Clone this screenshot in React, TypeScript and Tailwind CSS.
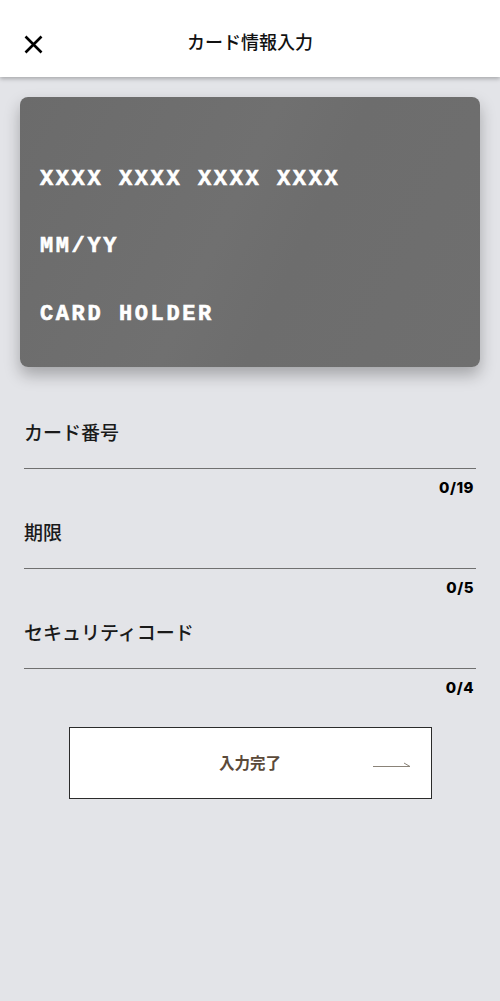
const jp = "font-['Noto_Sans_CJK_JP','Noto_Sans',sans-serif]";

const fields = [
    { label: 'カード番号', max: 19 },
    { label: '期限', max: 5 },
    { label: 'セキュリティコード', max: 4 },
];

const CardPreview = () => {
    return (
        <div className="mx-5 mt-5 h-[270px] rounded-[8px] bg-[linear-gradient(115deg,#6b6b6b_0%,#707070_45%,#6d6d6d_60%,#6f6f6f_100%)] shadow-[0_8px_16px_rgba(0,0,0,0.28)] px-5 pt-[69px] font-['Liberation_Mono',monospace] text-[22px] font-bold tracking-[2.6px] text-white [-webkit-text-stroke:0.6px_white]">
            <p className="leading-[28px]">XXXX XXXX XXXX XXXX</p>
            <p className="mt-[39px] leading-[28px]">MM/YY</p>
            <p className="mt-[40px] leading-[28px]">CARD HOLDER</p>
        </div>
    );
};

const Field = ({ label, max }: { label: string; max: number }) => {
    return (
        <div className="px-6">
            <div className="h-[69px] border-b border-[#707070] pt-[18px]">
                <span className={`${jp} text-[19px] font-medium text-[#1a1a1a]`}>{label}</span>
            </div>
            <p className="h-[31px] pt-[9px] pr-[2px] text-right font-['Inter',sans-serif] text-[15px] leading-[20px] font-extrabold tracking-[0.5px] text-black">
                0/{max}
            </p>
        </div>
    );
};

export default function App() {
    return (
        <div className="min-h-[1001px] bg-[#e3e4e8]">
            <header className="relative flex h-[77px] items-center justify-center bg-white pt-[6px] shadow-[0_2px_4px_rgba(0,0,0,0.25)]">
                <button className="absolute left-[24px] top-[35px]">
                    <svg width="19" height="19" viewBox="0 0 19 19" fill="none">
                        <path d="M1.5 1.5 L17.5 17.5 M17.5 1.5 L1.5 17.5" stroke="#000" strokeWidth="2.6" />
                    </svg>
                </button>
                <h1 className={`${jp} text-[18px] font-medium text-[#111]`}>カード情報入力</h1>
            </header>

            <CardPreview />

            <div className="mt-[33px]">
                {fields.map((f) => (
                    <Field key={f.label} label={f.label} max={f.max} />
                ))}
            </div>

            <div className="mt-[27px] flex justify-center">
                <button className="relative flex h-[72px] w-[363px] items-center justify-center border-[1.5px] border-[#2b2b2b] bg-white">
                    <span className={`${jp} text-[15.5px] font-bold text-[#5b4a3a]`}>入力完了</span>
                    <svg
                        className="absolute right-[19px] top-[30px]"
                        width="40"
                        height="10"
                        viewBox="0 0 40 10"
                        fill="none"
                    >
                        <path d="M1 8.5 H38 L32 5" stroke="#8a8378" strokeWidth="1" />
                    </svg>
                </button>
            </div>
        </div>
    );
}
